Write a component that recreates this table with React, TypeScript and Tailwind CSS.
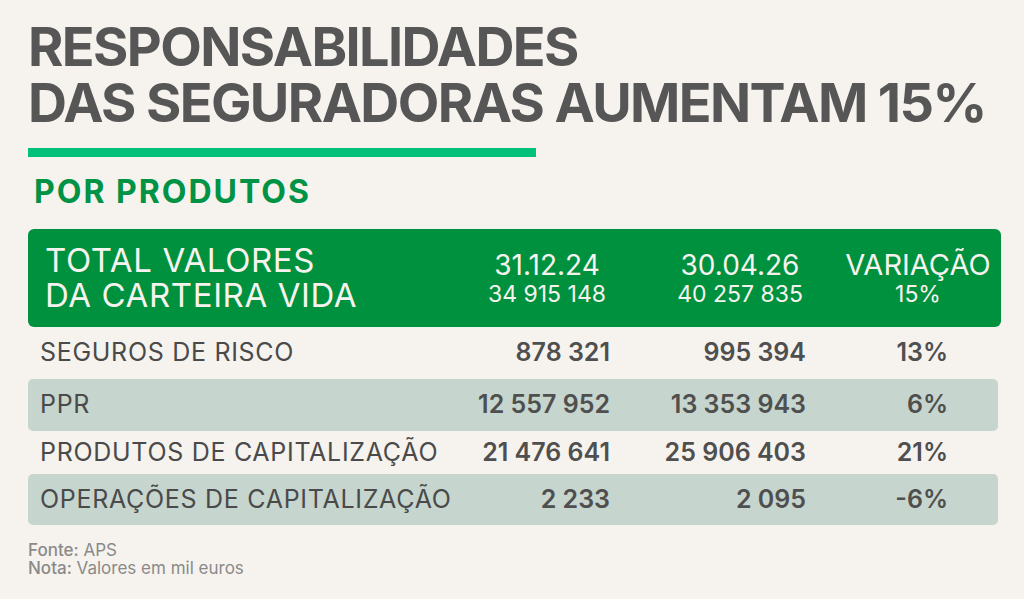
const rows = [
  { label: "SEGUROS DE RISCO", a: "878 321", b: "995 394", v: "13%", shaded: false, h: "h-[52px]" },
  { label: "PPR", a: "12 557 952", b: "13 353 943", v: "6%", shaded: true, h: "h-[52px]" },
  { label: "PRODUTOS DE CAPITALIZAÇÃO", a: "21 476 641", b: "25 906 403", v: "21%", shaded: false, h: "h-[43px]" },
  { label: "OPERAÇÕES DE CAPITALIZAÇÃO", a: "2 233", b: "2 095", v: "-6%", shaded: true, h: "h-[51px]" },
];

export default function App() {
  return (
    <div className="w-[1024px] h-[599px] bg-[#f6f3ee] pl-[28px] pt-[19px] font-['Inter',sans-serif] overflow-hidden">
      {/* Title */}
      <h1 className="whitespace-nowrap text-[54px] leading-[56px] font-bold text-[#565656] tracking-[-1.6px]">
        RESPONSABILIDADES
        <br />
        DAS SEGURADORAS AUMENTAM 15%
      </h1>

      <div className="mt-[17px] w-[508px] h-[9px] bg-[#00c07a]" />

      <h2 className="mt-[15px] ml-[6px] text-[32px] leading-[40px] font-bold tracking-[2px] text-[#009245]">
        POR PRODUTOS
      </h2>

      {/* Header */}
      <div className="mt-[17px] w-[973px] h-[98px] rounded-md bg-[#00913f] text-[#f6f3ee] flex items-center pl-[17px]">
        <div className="w-[424px] text-[33px] leading-[35px] tracking-[0.6px]">
          TOTAL VALORES
          <br />
          DA CARTEIRA VIDA
        </div>
        <div className="w-[156px] flex flex-col items-center">
          <div className="text-[28px] leading-[32px]">31.12.24</div>
          <div className="text-[23px] leading-[26px]">34 915 148</div>
        </div>
        <div className="w-[230px] flex flex-col items-center">
          <div className="text-[28px] leading-[32px]">30.04.26</div>
          <div className="text-[23px] leading-[26px]">40 257 835</div>
        </div>
        <div className="w-[126px] flex flex-col items-center">
          <div className="text-[29px] leading-[32px] whitespace-nowrap">VARIAÇÃO</div>
          <div className="text-[23px] leading-[26px]">15%</div>
        </div>
      </div>

      {/* Rows */}
      <div className="w-[970px]">
        {rows.map((r) => (
          <div
            key={r.label}
            className={`${r.h} flex items-center pl-[12px] rounded-[5px] ${r.shaded ? "bg-[#c6d5ce]" : ""}`}
          >
            <div className="w-[430px] text-[25px] tracking-[0.7px] text-[#4a4a4a] whitespace-nowrap">{r.label}</div>
            <div className="w-[140px] text-right text-[25px] font-semibold text-[#4f4f4f]">{r.a}</div>
            <div className="w-[196px] text-right text-[25px] font-semibold text-[#4f4f4f]">{r.b}</div>
            <div className="w-[142px] text-right text-[25px] font-semibold text-[#4f4f4f]">{r.v}</div>
          </div>
        ))}
      </div>

      {/* Footer */}
      <div className="mt-[16px] text-[17px] leading-[18px] text-[#8a8a8a]">
        <div>
          <span className="font-medium">Fonte:</span> APS
        </div>
        <div>
          <span className="font-medium">Nota:</span> Valores em mil euros
        </div>
      </div>
    </div>
  );
}
